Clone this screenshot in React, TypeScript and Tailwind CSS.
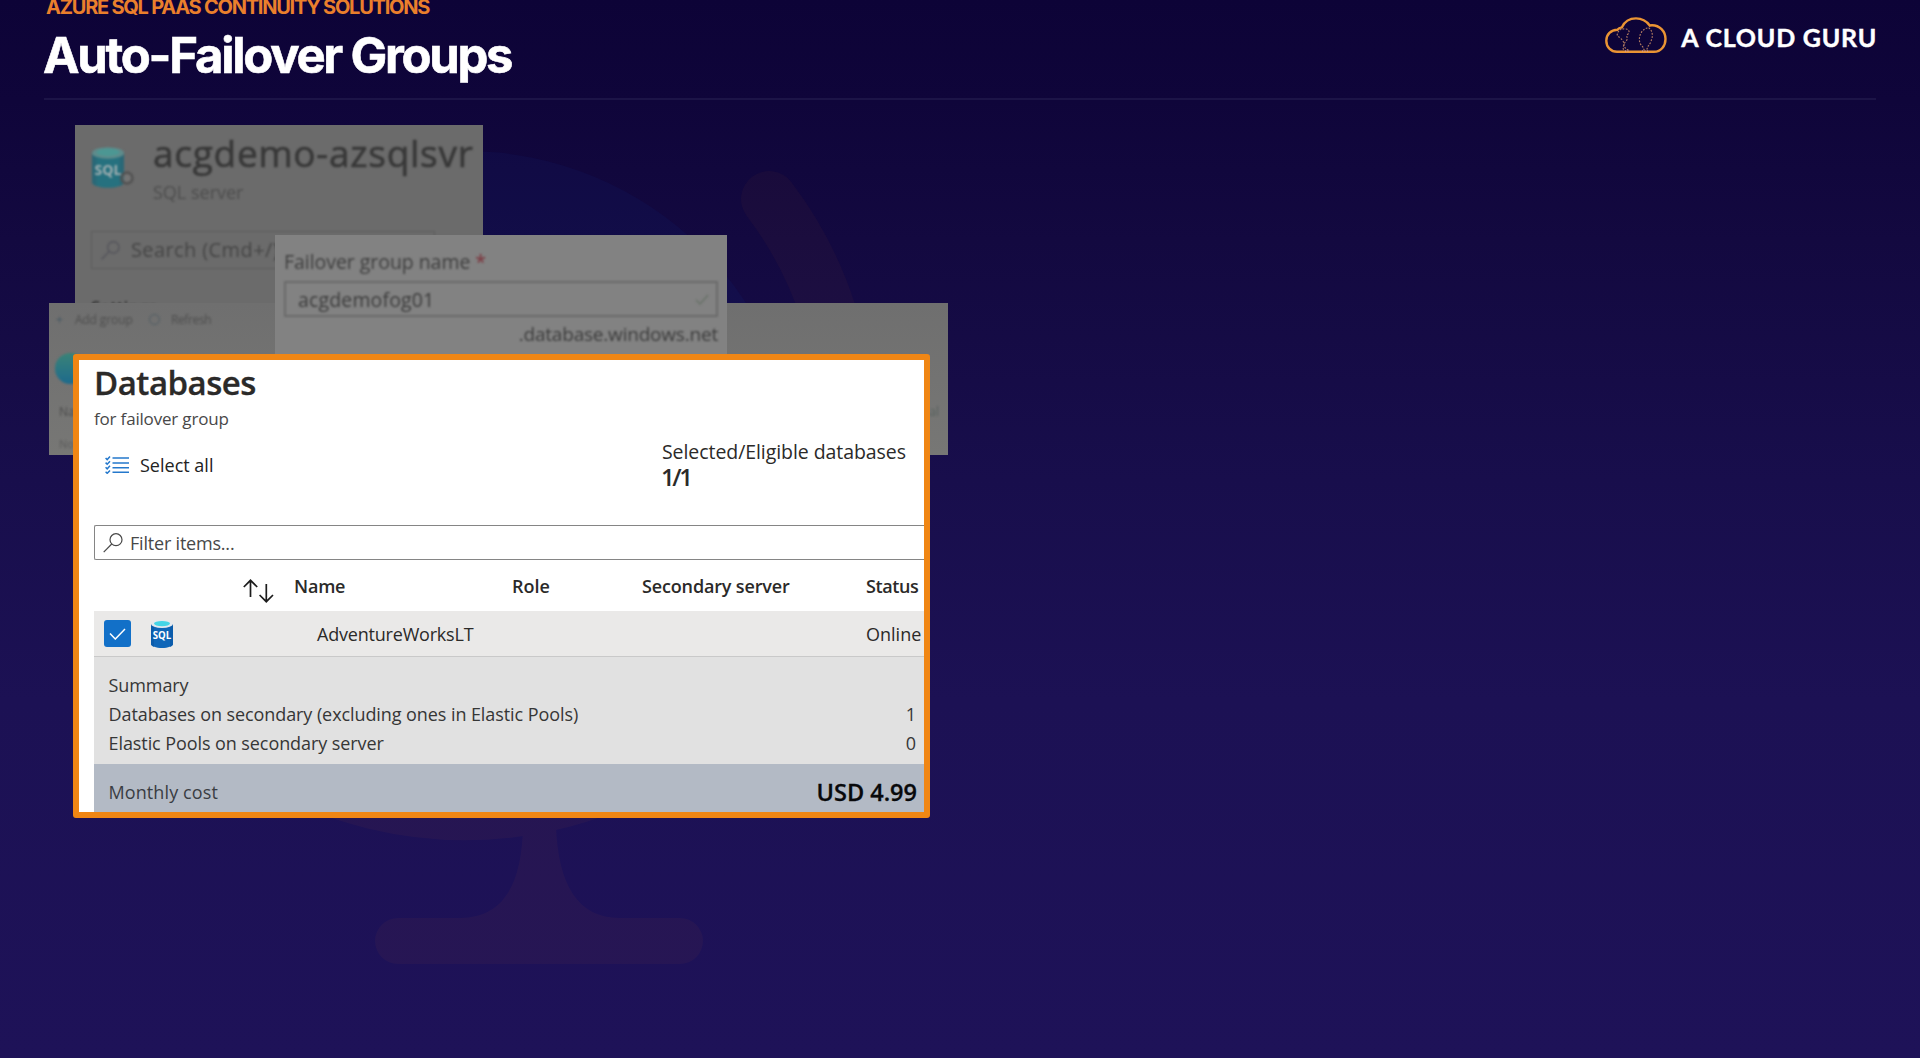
import type { ReactNode } from 'react';

function Backdrop() {
  return (
    <svg className="absolute inset-0 h-full w-full" viewBox="0 0 1920 1058" fill="none" aria-hidden="true">
      <circle cx="466" cy="485" r="334" fill="#1450d2" fillOpacity="0.06" />
      <g opacity="0.04">
        <path d="M769 199 A382 382 0 0 1 256 750" stroke="#f08020" strokeWidth="56" strokeLinecap="round" />
        <path
          d="M523 825 H556 C558 885 578 918 620 918 H680 A23 23 0 0 1 680 964 H398 A23 23 0 0 1 398 918 H460 C503 918 522 885 523 825Z"
          fill="#f08020"
        />
      </g>
    </svg>
  );
}

function CloudLogo() {
  return (
    <svg className="h-[37px] w-[62px]" viewBox="0 0 62 37" fill="none">
      <path
        d="M12 34.8 H49 C56 34.8 60.5 29 60.5 22 C60.5 14 54.5 8.2 47 8.2 C46.2 8.2 45.4 8.3 44.7 8.5 C41.5 4 36.8 1.4 31 1.4 C24.5 1.4 19.3 5 16.8 10.4 C15.2 10.7 13.2 11.7 12.3 12.7 C6 12.7 1.3 17.6 1.3 23.7 C1.3 30 6 34.8 12 34.8Z"
        stroke="#ea9434"
        strokeWidth="2.4"
      />
      <g stroke="#b07a60" strokeWidth="1.2" strokeDasharray="0.8 2.4" strokeLinecap="round">
        <path d="M16 12 C12 15 11 19 14 20 C17 22 19 25 19 27 C19 30 21 33 24 33" />
        <path d="M18 12 C22 11 26 14 23 17 C20 19 24 21 21 24 C19 26 17 32 19 33" />
        <path d="M42 11 C36 13 33 20 35 26 C36 29 39 30 39 33" />
        <path d="M44 11 C48 14 48 20 46 24 C45 28 42 29 42 33" />
      </g>
      <path d="M37 34 H43 M20 34 H24" stroke="#c9a0c0" strokeWidth="1" strokeDasharray="1 1.5" />
    </svg>
  );
}

function SqlCylinder({ className, body = '#0f66b8', bodyDark = '#0b5cab', lid = '#e4e9ee', water = '#45d5e6', label = '#ffffff' }: {
  className: string;
  body?: string;
  bodyDark?: string;
  lid?: string;
  water?: string;
  label?: string;
}) {
  return (
    <svg className={className} viewBox="0 0 22 28">
      <path d="M0 4 V24 C0 26.3 5 28 11 28 C17 28 22 26.3 22 24 V4Z" fill={body} />
      <path d="M0 4 V24 C0 25 1 26 3 26.8 V4Z M22 4 V24 C22 25 21 26 19 26.8 V4Z" fill={bodyDark} />
      <ellipse cx="11" cy="4" rx="11" ry="4" fill={lid} />
      <ellipse cx="11" cy="3.6" rx="8" ry="2.6" fill={water} />
      <text x="11" y="19.2" textAnchor="middle" fontFamily="Open Sans, sans-serif" fontWeight="700" fontSize="10" textLength="18.5" lengthAdjust="spacingAndGlyphs" fill={label}>
        SQL
      </text>
    </svg>
  );
}

function SearchIcon({ className }: { className: string }) {
  return (
    <svg className={className} viewBox="0 0 20 20" fill="none" stroke="currentColor" strokeWidth="1.2">
      <circle cx="13" cy="6.7" r="6" />
      <path d="M8.7 11 L0.7 19.2" />
    </svg>
  );
}

function ServerCard() {
  return (
    <section className="absolute left-[75px] top-[125px] h-[178px] w-[408px] overflow-hidden bg-[#6b6b6b]">
      <div className="flex blur-[0.8px]">
        <div className="relative ml-[17px] mt-[22px] h-[42px] w-[45px]">
          <SqlCylinder className="h-[41px] w-[32px]" body="#26717f" bodyDark="#2a6877" lid="#5f8b8b" water="#4c9793" label="#a3b0b2" />
          <svg className="absolute left-[27px] top-[23px] size-[16px]" viewBox="0 0 16 16" fill="none">
            <circle cx="8" cy="8" r="5.5" stroke="#525252" strokeWidth="2.5" />
            <circle cx="8" cy="8" r="3.5" fill="#747474" />
          </svg>
        </div>
        <div className="ml-[16px] mt-[3px]">
          <h2 className="whitespace-nowrap text-[37px] font-medium leading-[50px] tracking-[0.72px] text-[#383838] [-webkit-text-stroke:0.6px_#383838]">acgdemo-azsqlsvr</h2>
          <p className="-mt-px text-[18px] leading-[30px] text-[#4d4d4d]">SQL server</p>
        </div>
      </div>
      <div className="ml-[16px] mt-[24px] flex h-[38px] w-[344px] items-center border border-[#5e5e5e] blur-[0.8px]">
        <SearchIcon className="ml-[9px] size-[19px] text-[#505058]" />
        <span className="ml-[11px] whitespace-nowrap text-[20px] tracking-[0.4px] text-[#454545]">Search (Cmd+/)</span>
      </div>
      <p className="ml-[16px] mt-[26px] text-[17px] font-semibold leading-[24px] text-[#303030] blur-[0.8px]">Settings</p>
    </section>
  );
}

function GroupsCard() {
  return (
    <section className="absolute left-[49px] top-[303px] h-[152px] w-[899px] overflow-hidden bg-gradient-to-b from-[#6f6f6f] to-[#777775]">
      <div className="flex h-[33px] items-center text-[12px] text-[#4e4e4e] blur-[1.3px]">
        <span className="ml-[7px] text-[#455763]">+</span>
        <span className="ml-[12px] w-[74px] tracking-[-0.1px]">Add group</span>
        <span className="size-[11px] rounded-full border border-[#4f5c63]" />
        <span className="ml-[11px] tracking-[-0.35px]">Refresh</span>
      </div>
      <div className="ml-[6px] mt-[17px] size-[31px] rounded-full bg-gradient-to-b from-[#3a8377] to-[#1d6a8c] blur-[1.3px]" />
      <div className="ml-[10px] mt-[18px] flex h-[20px] w-[880px] items-center justify-between text-[12px] text-[#4c4c4c] blur-[1.3px]">
        <span>Name</span>
        <span className="text-[#56605e]">al</span>
      </div>
      <p className="ml-[10px] mt-[12px] text-[11px] leading-[20px] text-[#5c5c5c] blur-[1.3px]">No</p>
    </section>
  );
}

function FailoverNameCard() {
  return (
    <section className="absolute left-[275px] top-[235px] h-[119px] w-[452px] bg-[#828282] px-[9px]">
      <div className="blur-[0.8px]">
        <p className="pt-[13px] text-[19.5px] leading-[28px] tracking-[-0.05px] text-[#3e3e3e]">
          Failover group name <span className="text-[#7c2f38]">*</span>
        </p>
        <div className="mt-[5px] flex h-[36px] items-center justify-between border-2 border-[#6a6a6a] pl-[12px] pr-[7px]">
          <span className="pt-px text-[19.5px] tracking-[0.15px] text-[#3c3c3c]">acgdemofog01</span>
          <svg className="h-[11px] w-[14px]" viewBox="0 0 14 11" fill="none" stroke="#667066" strokeWidth="1.3">
            <path d="M1 6 L5 10 L13 1" />
          </svg>
        </div>
        <p className="mt-[3px] text-right text-[19px] leading-[28px] tracking-[-0.2px] text-[#3c3c3c]">.database.windows.net</p>
      </div>
    </section>
  );
}

function SelectAllIcon() {
  return (
    <svg className="h-[18px] w-[24px]" viewBox="0 0 24 18" fill="none" stroke="#2478cc">
      <path strokeWidth="1.5" d="M7.5 2.1 H24 M7.5 7 H24 M7.5 11.7 H24 M7.5 16.3 H24" />
      <path strokeWidth="1.5" d="M0.6 2 L2.2 3.6 L5 0.6 M0.6 6.6 L2.2 8.2 L5 5.2 M0.6 11.2 L2.2 12.8 L5 9.8 M0.6 15.8 L2.2 17.3 L5 14.4" />
    </svg>
  );
}

function SortIcon() {
  return (
    <svg className="h-[24px] w-[31px]" viewBox="0 0 31 24" fill="none" stroke="#1c1c1c" strokeWidth="1.7">
      <path d="M7.5 18 V1.4 M0.8 8 L7.5 1.3 L14.2 8" />
      <path d="M23.3 5 V22.6 M16.6 16 L23.3 22.7 L30 16" />
    </svg>
  );
}

const COLUMNS = 'grid grid-cols-[200px_218px_130px_224px_1fr] items-center whitespace-nowrap';

function SummaryLine({ label, value }: { label: string; value?: ReactNode }) {
  return (
    <div className="flex justify-between">
      <span>{label}</span>
      <span>{value}</span>
    </div>
  );
}

function DatabasesCard() {
  return (
    <section className="absolute left-[73px] top-[354px] h-[464px] w-[857px] overflow-hidden rounded-[3px] border-6 border-[#f08614] bg-white pl-[15px] text-[18px] text-[#2b2a29]">
      <h2 className="text-[33px] font-semibold leading-[45px] tracking-[-0.5px] [-webkit-text-stroke:0.3px_#2b2a29]">Databases</h2>
      <p className="mt-[2px] text-[17px] leading-[24px] tracking-[-0.18px] text-[#484848]">for failover group</p>
      <div className="mt-[8px] flex h-[86px] items-start justify-between">
        <div className="ml-[11px] mt-[14px] flex items-center gap-[11px] leading-[24px] text-[#222222]">
          <SelectAllIcon />
          <span>Select all</span>
        </div>
        <div className="w-[262px] whitespace-nowrap leading-[26px]">
          <p className="text-[19.5px] tracking-[-0.07px]">Selected/Eligible databases</p>
          <p className="-ml-px -mt-px text-[24px] font-semibold tracking-[-2.4px]">1/1</p>
        </div>
      </div>
      <div className="flex h-[35px] items-center rounded-l-[2px] border border-r-0 border-[#858585] pl-[8px] text-[#484848]">
        <SearchIcon className="size-[20px]" />
        <span className="ml-[7px] pt-px tracking-[-0.2px]">Filter items...</span>
      </div>
      <div className={`${COLUMNS} h-[51px] pt-px font-semibold`}>
        <span className="ml-[149px] mt-[10px]"><SortIcon /></span>
        <span className="tracking-[-0.2px]">Name</span>
        <span>Role</span>
        <span className="tracking-[-0.15px]">Secondary server</span>
        <span className="tracking-[-0.4px]">Status</span>
      </div>
      <div className={`${COLUMNS} h-[46px] border-b border-[#c9c9c9] bg-[#eae9e8]`}>
        <span className="ml-[10px] flex items-center gap-[20px]">
          <span className="flex size-[27px] items-center justify-center rounded-[3px] bg-[#1270c8]">
            <svg className="h-[12px] w-[17px]" viewBox="0 0 17 12" fill="none" stroke="#ffffff" strokeWidth="1.5">
              <path d="M1 5.5 L6.3 11 L16 1" />
            </svg>
          </span>
          <SqlCylinder className="h-[28px] w-[22px]" />
        </span>
        <span className="pl-[23px] pt-px tracking-[-0.2px]">AdventureWorksLT</span>
        <span />
        <span />
        <span className="pt-px">Online</span>
      </div>
      <div className="h-[107px] bg-[#e1e1e1] pl-[14.5px] pr-[8px] pt-[14px] leading-[29px] tracking-[-0.08px] text-[#363636]">
        <SummaryLine label="Summary" />
        <SummaryLine label="Databases on secondary (excluding ones in Elastic Pools)" value="1" />
        <SummaryLine label="Elastic Pools on secondary server" value="0" />
      </div>
      <div className="flex h-[48px] items-center justify-between bg-[#b3bac5] pl-[14.5px] pr-[7px] pt-[9px] text-[#3a3d43]">
        <span className="tracking-[0.1px]">Monthly cost</span>
        <span className="text-[23.5px] font-semibold text-[#08090b] [-webkit-text-stroke:0.3px_#08090b]">USD 4.99</span>
      </div>
    </section>
  );
}

export default function App() {
  return (
    <main className="relative h-[1058px] w-[1920px] overflow-hidden bg-[linear-gradient(to_bottom,#0d0337_0px,#0f053a_100px,#130940_240px,#180e4c_480px,#1c1154_700px,#1e1258_1058px)] font-['Open_Sans','Noto_Sans',sans-serif]">
      <Backdrop />
      <header className="relative mx-[44px] flex h-[100px] justify-between border-b-2 border-[#1c1447]">
        <div className="-mt-[3px] whitespace-nowrap font-['Inter',sans-serif] font-bold">
          <p className="pl-[2px] text-[20px] leading-[20px] tracking-[-1.24px] text-[#ea7f2c]">AZURE SQL PAAS CONTINUITY SOLUTIONS</p>
          <h1 className="-ml-px mt-[9px] text-[49px] leading-[60px] tracking-[-2.25px] text-white [-webkit-text-stroke:0.6px_white]">Auto-Failover Groups</h1>
        </div>
        <div className="-mr-px flex h-[37px] items-center gap-[14px] pt-[34px] font-['Lato',sans-serif]">
          <CloudLogo />
          <span className="mt-[3px] whitespace-nowrap text-[25px] font-bold leading-[30px] tracking-[0.76px] text-white [-webkit-text-stroke:0.4px_white]">A CLOUD GURU</span>
        </div>
      </header>
      <ServerCard />
      <GroupsCard />
      <FailoverNameCard />
      <DatabasesCard />
    </main>
  );
}
